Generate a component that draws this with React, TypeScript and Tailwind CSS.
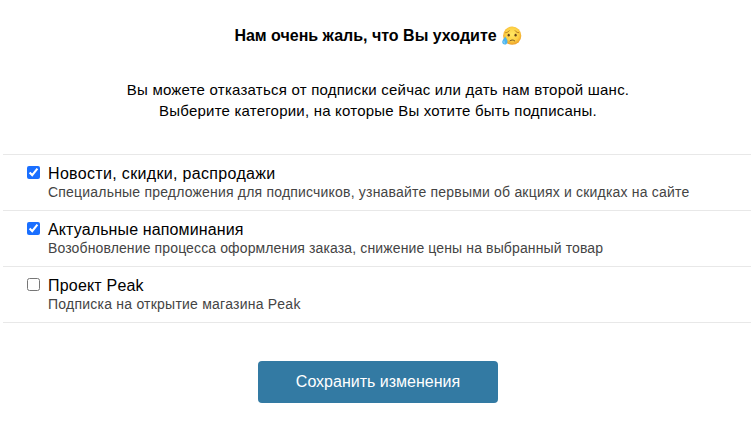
import React from 'react';
import { clsx } from 'clsx';

interface Category {
  title: string;
  text: string;
  checked: boolean;
  titleClass: string;
  textClass: string;
}

const categories: Category[] = [
  {
    title: 'Новости, скидки, распродажи',
    text: 'Специальные предложения для подписчиков, узнавайте первыми об акциях и скидках на сайте',
    checked: true,
    titleClass: 'tracking-[0.33px]',
    textClass: 'tracking-[0.195px]',
  },
  {
    title: 'Актуальные напоминания',
    text: 'Возобновление процесса оформления заказа, снижение цены на выбранный товар',
    checked: true,
    titleClass: 'tracking-[0.12px]',
    textClass: 'tracking-[0.125px]',
  },
  {
    title: 'Проект Peak',
    text: 'Подписка на открытие магазина Peak',
    checked: false,
    titleClass: 'tracking-[0.2px]',
    textClass: 'tracking-[0.23px]',
  },
];

const SadFace: React.FC = () => (
  <svg viewBox="0 0 20 20" className="h-5 w-5 shrink-0" aria-hidden="true">
    <defs>
      <radialGradient id="face" cx="50%" cy="42%" r="56%">
        <stop offset="0" stopColor="#ffe763" />
        <stop offset="0.65" stopColor="#fdd044" />
        <stop offset="1" stopColor="#eda02a" />
      </radialGradient>
    </defs>
    <circle cx="10.2" cy="9.7" r="9.1" fill="url(#face)" />
    <path d="M3.7 6.7c1.5-.1 2.7-.8 3.5-1.9M16.7 6.7c-1.5-.1-2.7-.8-3.5-1.9" fill="none" stroke="#a46b16" strokeWidth="0.8" strokeLinecap="round" />
    <ellipse cx="6.7" cy="9.2" rx="1.1" ry="1.4" fill="#65421b" />
    <ellipse cx="13.6" cy="9.2" rx="1.1" ry="1.4" fill="#65421b" />
    <path d="M8 14.8c1.1-1.1 3.5-1.1 4.6 0" fill="none" stroke="#75501f" strokeWidth="1" strokeLinecap="round" />
    <path d="M3.2 10.4c1 1.8 2.3 3.4 2.3 5.1 0 1.9-1.1 3.1-2.7 3.1S.2 17.5.2 15.8c0-1.700 2-3.300 3-5.400z" fill="#4bb4ee" />
    <path d="M2 15.2c-.3 1 .1 1.8.8 2.2" fill="none" stroke="#a9e2ff" strokeWidth="0.8" strokeLinecap="round" />
  </svg>
);

export default function App() {
  return (
    <main className="h-[432px] w-[751px] overflow-hidden bg-white pl-[3px] font-['Liberation_Sans',sans-serif] text-black">
      <h1 className="flex items-center justify-center gap-[5px] pt-[25px] pl-[2px] text-[16px] leading-[21px] font-bold">
        Нам очень жаль, что Вы уходите
        <SadFace />
      </h1>
      <p className="mt-[33px] pl-[2px] text-center text-[15px] leading-[21px]">
        <span className="tracking-[0.23px]">Вы можете отказаться от подписки сейчас или дать нам второй шанс.</span>
        <br />
        <span className="tracking-[0.21px]">Выберите категории, на которые Вы хотите быть подписаны.</span>
      </p>
      <ul className="mt-[33px] border-t border-[#e8e8e8]">
        {categories.map((c) => (
          <li key={c.title} className="border-b border-[#e8e8e8]">
            <label className="flex h-[55px] pl-6">
              <input type="checkbox" defaultChecked={c.checked} className="mt-[11px] h-[13px] w-[13px] accent-[#1a6fff]" />
              <div className="ml-2 pt-[9px] whitespace-nowrap">
                <div className={clsx('text-[16px] leading-5', c.titleClass)}>{c.title}</div>
                <div className={clsx('-mt-px text-[14px] leading-[18px] text-[#444]', c.textClass)}>{c.text}</div>
              </div>
            </label>
          </li>
        ))}
      </ul>
      <div className="mt-[38px] flex justify-center pl-[2px]">
        <button className="h-[42px] w-60 rounded-[4px] bg-[#337aa3] text-[16px] text-white">Сохранить изменения</button>
      </div>
    </main>
  );
}
